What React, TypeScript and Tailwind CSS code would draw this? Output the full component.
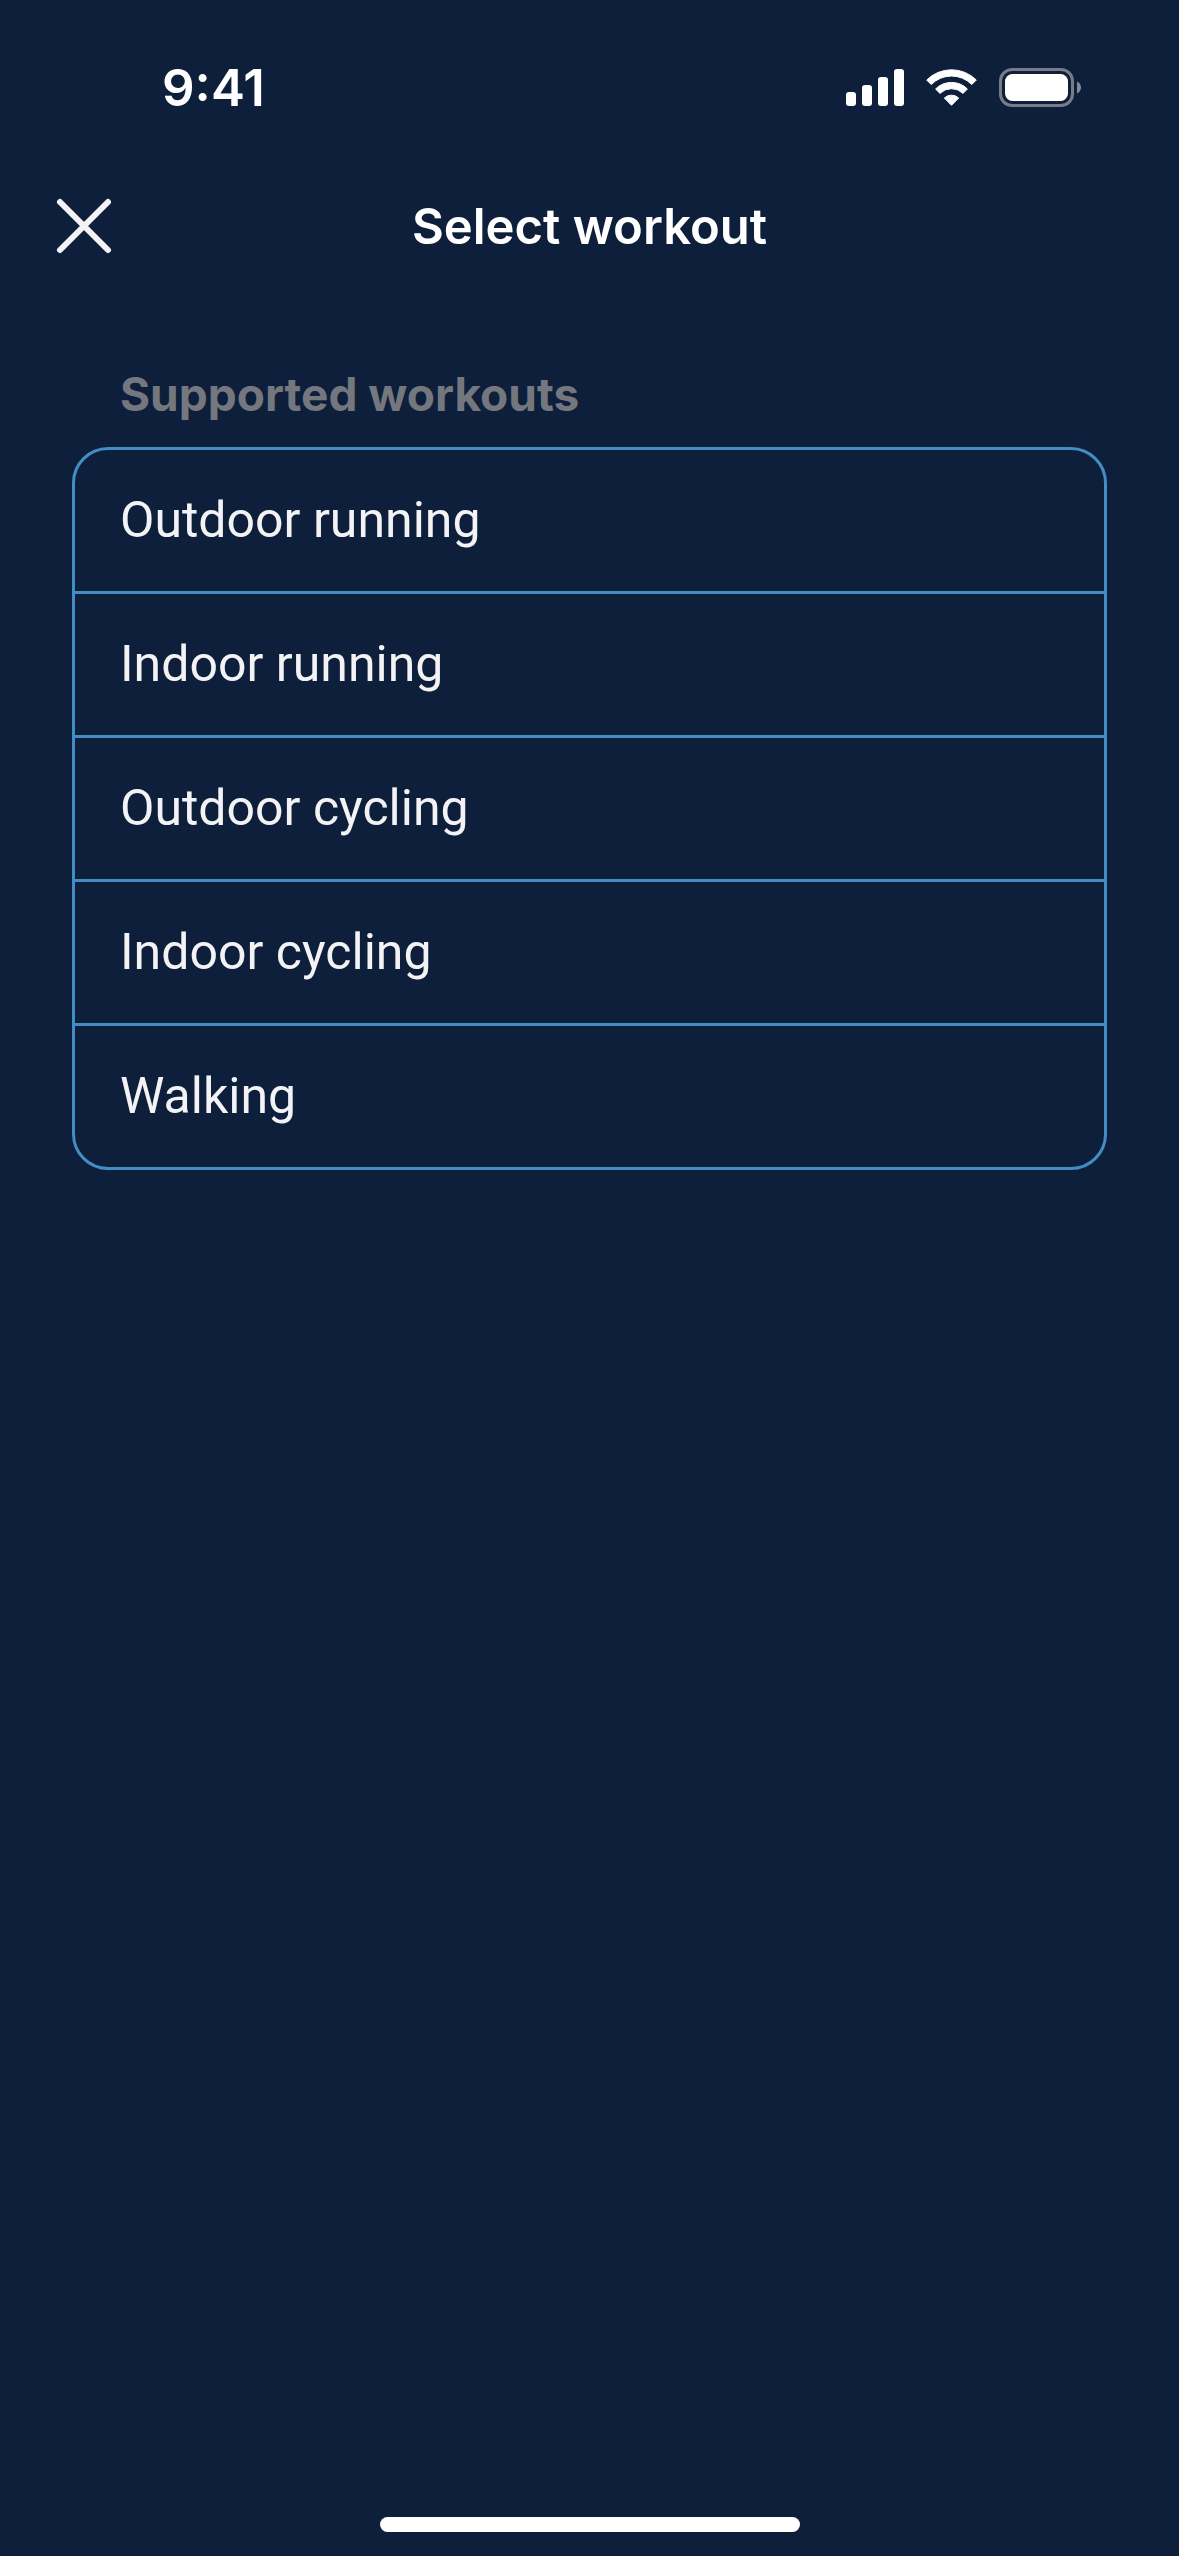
const workouts = [
  "Outdoor running",
  "Indoor running",
  "Outdoor cycling",
  "Indoor cycling",
  "Walking",
];

function SignalIcon() {
  return (
    <svg className="h-[37px] w-[58px]" viewBox="0 0 58 37" fill="currentColor" aria-hidden="true">
      <rect x="0" y="23" width="10" height="14" rx="3" />
      <rect x="16" y="16" width="10" height="21" rx="3" />
      <rect x="32" y="8" width="10" height="29" rx="3" />
      <rect x="48" y="0" width="10" height="37" rx="3" />
    </svg>
  );
}

function WifiIcon() {
  return (
    <svg
      className="h-[37px] w-[51px]"
      viewBox="0 0 51 37"
      fill="currentColor"
      stroke="currentColor"
      strokeWidth="1"
      strokeLinejoin="round"
      aria-hidden="true"
    >
      <path d="M0.7 11A35.2 35.2 0 0 1 50.3 11L45.8 15.5A28.6 28.6 0 0 0 5.2 15.5Z" />
      <path d="M9.6 20A22.4 22.4 0 0 1 41.4 20L37 24.4A16.4 16.4 0 0 0 14 24.4Z" />
      <path d="M18.3 29A10.5 10.5 0 0 1 32.7 29L25.5 36.3Z" />
    </svg>
  );
}

function BatteryIcon() {
  return (
    <svg className="h-[39px] w-[82px]" viewBox="0 0 82 39" aria-hidden="true">
      <rect x="1.5" y="1.5" width="72" height="36" rx="11.5" fill="none" stroke="#787c86" strokeWidth="3" />
      <rect x="6" y="6" width="63" height="27" rx="7.5" fill="#fff" />
      <path d="M78 13.5V25.5C80.6 24.4 82 22 82 19.5S80.6 14.6 78 13.5Z" fill="#868a93" />
    </svg>
  );
}

export default function App() {
  return (
    <div className="flex min-h-screen flex-col bg-[#0e1f3b] font-['Inter',sans-serif] text-white">
      <div className="flex h-[175px] items-center justify-between pl-[162px] pr-[98px]">
        <span className="text-[51px] leading-none font-semibold">9:41</span>
        <div className="flex items-center gap-[22px]">
          <SignalIcon />
          <WifiIcon />
          <BatteryIcon />
        </div>
      </div>

      <header className="grid h-[102px] grid-cols-[1fr_auto_1fr] items-center px-12">
        <button type="button" aria-label="Close" className="size-[72px] text-[#f3f3f5]">
          <svg className="size-full" viewBox="0 0 72 72" fill="none" stroke="currentColor" strokeWidth="6" strokeLinecap="round" aria-hidden="true">
            <path d="M12 12L60 60M60 12L12 60" />
          </svg>
        </button>
        <h1 className="text-[49px] leading-none font-semibold">Select workout</h1>
      </header>

      <main className="flex-1 px-[72px] pt-[83px]">
        <h2 className="px-12 pb-[19px] text-[46px] leading-[68px] font-bold text-[#74777e]">
          Supported workouts
        </h2>
        <ul className="divide-y-3 divide-[#438dc5] overflow-hidden rounded-[36px] border-3 border-[#438dc5] font-['Roboto',sans-serif]">
          {workouts.map((name) => (
            <li key={name}>
              <button type="button" className="h-[141px] w-full px-[45px] pb-0.5 text-left text-[50px] leading-none text-[#f3f3f5]">
                {name}
              </button>
            </li>
          ))}
        </ul>
      </main>

      <div className="flex justify-center pb-6">
        <div className="h-[15px] w-[420px] rounded-full bg-white" />
      </div>
    </div>
  );
}
